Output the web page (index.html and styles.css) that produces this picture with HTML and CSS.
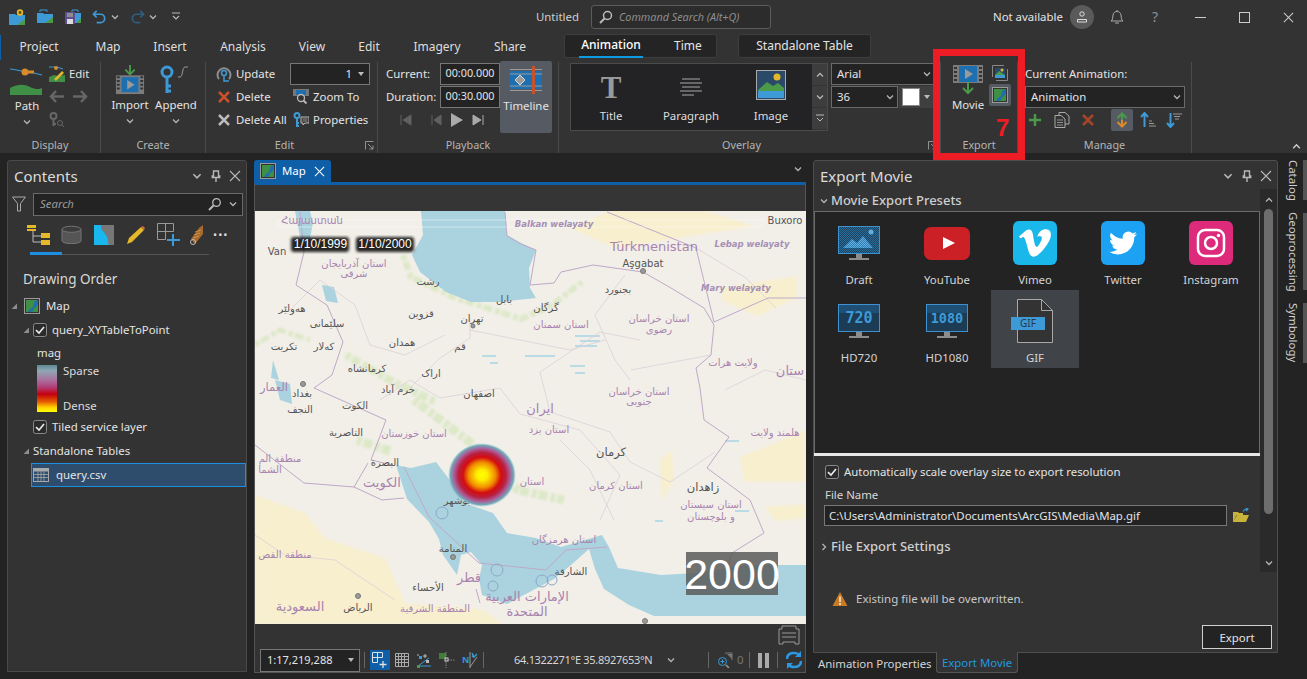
FILE: index.html
```html
<!DOCTYPE html>
<html lang="en">
<head>
<meta charset="utf-8">
<title>Untitled - Animation Export</title>
<link rel="stylesheet" href="styles.css">
</head>
<body>
<svg class="defs" width="0" height="0">
  <defs><pattern id="chk" width="2" height="2" patternUnits="userSpaceOnUse"><rect width="2" height="2" fill="#1c4463"/><rect width="1" height="1" fill="#2a6a97"/><rect x="1" y="1" width="1" height="1" fill="#2a6a97"/></pattern>
  <pattern id="chk2" width="2" height="2" patternUnits="userSpaceOnUse"><rect width="2" height="2" fill="#2f7fb5"/><rect width="1" height="1" fill="#62aee0"/><rect x="1" y="1" width="1" height="1" fill="#62aee0"/></pattern></defs>
  <symbol id="mapi" viewBox="0 0 16 16"><rect x=".5" y=".5" width="15" height="15" fill="#333" stroke="#9a9a9a"/><rect x="2" y="2" width="12" height="12" fill="#3f8f46"/><path d="M14 2v4l-2 3-2 1-1 3-3 1H4l2-3 3-2 1-4 1-2z" fill="#1d6fb0"/></symbol>
  <symbol id="chev" viewBox="0 0 10 10"><path d="M2 3.500 5 6.500 8 3.500" fill="none" stroke="currentColor" stroke-width="1.300"/></symbol>
  <symbol id="x" viewBox="0 0 12 12"><path d="M1 1 11 11M11 1 1 11" fill="none" stroke="currentColor" stroke-width="1.100"/></symbol>
  <symbol id="pin" viewBox="0 0 12 12"><path d="M3.500 1h5v5h1.200v1.500H2.300V6h1.200zM6 7.500V12" fill="none" stroke="currentColor" stroke-width="1.400"/></symbol>
  <symbol id="tri" viewBox="0 0 8 8"><path d="M7 1.500V7H1.500z" fill="#8d8d8d"/></symbol>
  <symbol id="check" viewBox="0 0 14 14"><rect x=".5" y=".5" width="13" height="13" rx="2" fill="#2b2b2b" stroke="#8a8a8a"/><path d="M3 7.200 6 10l5-6" fill="none" stroke="#e8e8e8" stroke-width="1.700"/></symbol>
  <symbol id="mon" viewBox="0 0 44 44"><rect x="1.500" y="5.500" width="41" height="27" fill="#1c3c55" stroke="#3f92cf"/><path d="M19 33h6v4h-6zM12 37h20v2H12z" fill="#8c8c8c"/></symbol>
</svg>

<header class="titlebar">
  <div class="qat">
    <svg class="i16" viewBox="0 0 16 16"><path d="M0 5h6l1 1h9v10H0z" fill="#3d9ad6"/><path d="M8 16l8-6v6z" fill="#4b9a4a"/><circle cx="11" cy="3.500" r="3.200" fill="#e5b82a"/><circle cx="11" cy="3.500" r="1.400" fill="#5b4a10"/></svg>
    <svg class="i16" viewBox="0 0 16 16"><path d="M3 3V1h7v2" fill="none" stroke="#3d9ad6"/><path d="M0 4h6l1 1h9v9H0z" fill="#3d9ad6"/><path d="M8 14l8-6v6z" fill="#4b9a4a"/></svg>
    <svg class="i16" viewBox="0 0 16 16"><path d="M7 3V1h6v2" fill="none" stroke="#3d9ad6"/><path d="M7 4h9v10H7z" fill="#3d9ad6"/><path d="M11 14l5-5v5z" fill="#4b9a4a"/><rect x="0" y="3" width="10" height="12" fill="#5d4d94"/><rect x="2" y="4" width="6" height="4" fill="#8d8d8d"/><rect x="2" y="10" width="6" height="5" fill="#ddd"/></svg>
    <svg class="undo" viewBox="0 0 16 16"><path d="M5 1 1.500 4.500 5 8M2 4.500h7a4.500 4.500 0 0 1 0 9H5" fill="none" stroke="#3d9ad6" stroke-width="1.800"/></svg>
    <svg class="chv"><use href="#chev"/></svg>
    <svg class="undo" viewBox="0 0 16 16"><path d="M11 1l3.500 3.500L11 8M14 4.500H7a4.500 4.500 0 0 0 0 9h4" fill="none" stroke="#2d5f82" stroke-width="1.800"/></svg>
    <svg class="chv"><use href="#chev"/></svg>
    <svg class="cust" viewBox="0 0 10 10"><path d="M1 1h8M2 4l3 3 3-3" fill="none" stroke="#bbb" stroke-width="1.100"/></svg>
  </div>
  <div class="tcenter">
    <span class="doc">Untitled</span>
    <div class="cmd">
      <svg class="i14" viewBox="0 0 14 14"><circle cx="8.500" cy="5.500" r="4" fill="none" stroke="#bbb" stroke-width="1.500"/><path d="M5.500 8.500 1 13" stroke="#bbb" stroke-width="2"/></svg>
      <span>Command Search (Alt+Q)</span>
    </div>
  </div>
  <div class="tright">
    <span class="na">Not available</span>
    <span class="avatar"><svg class="i12" viewBox="0 0 12 12"><circle cx="6" cy="3" r="2.200" fill="none" stroke="#ddd"/><path d="M1.500 11V8.500h9V11z" fill="none" stroke="#ddd"/></svg></span>
    <svg class="bell" viewBox="0 0 14 16"><path d="M1 12c2-1 1.500-3 2-6 .5-2.500 2-3.500 4-3.500s3.500 1 4 3.500c.5 3 0 5 2 6zM5 14h4M7 1v1.500" fill="none" stroke="#aaa"/></svg>
    <span class="help">?</span>
    <svg class="win first" viewBox="0 0 11 11"><path d="M0 5.500h11" stroke="#ccc"/></svg>
    <svg class="win" viewBox="0 0 11 11"><rect x=".5" y=".5" width="10" height="10" fill="none" stroke="#ccc"/></svg>
    <svg class="win"><use href="#x"/></svg>
  </div>
</header>

<nav class="tabs">
  <a class="t t78">Project</a><a class="t t60">Map</a><a class="t t64">Insert</a><a class="t t82">Analysis</a><a class="t t56">View</a><a class="t t58">Edit</a><a class="t t78">Imagery</a><a class="t t68">Share</a>
  <div class="ctx ctx1"><a class="cur">Animation</a><a class="t-time">Time</a></div>
  <div class="ctx ctx2"><a>Standalone Table</a></div>
</nav>

<section class="ribbon">
  <div class="group g-display">
    <div class="gbody">
      <div class="big path">
        <svg class="ico34" viewBox="0 0 34 30"><path d="M0 3c8 1 14 3 20 3l12 3" fill="none" stroke="#3d9ad6" stroke-width="1.200"/><circle cx="15" cy="6" r="3.500" fill="#d98a2b"/><rect x="18" y="4.500" width="6" height="3" fill="#d98a2b"/><path d="M0 22c8-4 14-4 20-1s10 2 12 1v7H0z" fill="#3f8f46"/></svg>
        <span>Path</span><svg class="chv"><use href="#chev"/></svg>
      </div>
      <div class="stack s-disp">
        <div class="row"><svg class="i16" viewBox="0 0 16 16"><path d="M0 1h8l6 2" stroke="#3d9ad6" fill="none"/><circle cx="7" cy="2" r="2" fill="#d98a2b"/><path d="M0 11l5-2 4 1 7-1v7H0z" fill="#3f8f46"/><path d="M6 14 14 6" stroke="#e5b82a" stroke-width="2.500"/></svg><span>Edit</span></div>
        <div class="row"><svg class="i16" viewBox="0 0 16 16"><path d="M7 2 2 7.500 7 13M2 7.500h13" fill="none" stroke="#666" stroke-width="2.500"/></svg><svg class="i16 sp" viewBox="0 0 16 16"><path d="M9 2l5 5.500L9 13M14 7.500H1" fill="none" stroke="#666" stroke-width="2.500"/></svg></div>
        <div class="row"><svg class="i16" viewBox="0 0 16 16"><circle cx="4.500" cy="4" r="3" fill="none" stroke="#666" stroke-width="2"/><path d="M4.500 7v7M4.500 12H7" stroke="#666" stroke-width="2"/><circle cx="11" cy="11" r="2.500" fill="none" stroke="#666"/><path d="M13 13l2 2" stroke="#666"/></svg></div>
      </div>
    </div>
    <div class="glabel">Display</div>
  </div>

  <div class="group g-create">
    <div class="gbody">
      <div class="big b-import">
        <svg class="ico34" viewBox="0 0 34 32"><path d="M17 0v9M12 5l5 5 5-5" fill="none" stroke="#4b9a4a" stroke-width="2"/><rect x="0" y="11" width="30" height="20" fill="#7c7c7c" transform="translate(2)"/><rect x="8" y="13" width="18" height="16" fill="#1d6fb0"/><path d="M14 16l8 5-8 5z" fill="#9a9a9a"/><path d="M3 13h3M3 17h3M3 21h3M3 25h3M28 13h3M28 17h3M28 21h3M28 25h3" stroke="#333" stroke-width="2"/></svg>
        <span>Import</span><svg class="chv"><use href="#chev"/></svg>
      </div>
      <div class="big b-append">
        <svg class="ico34" viewBox="0 0 34 30"><circle cx="8" cy="7" r="5" fill="none" stroke="#3d9ad6" stroke-width="3"/><path d="M8 12v16M8 21h4M8 26h4" stroke="#3d9ad6" stroke-width="3"/><path d="M19 12h2c3 0 2-10 5-10h3" fill="none" stroke="#999"/></svg>
        <span>Append</span><svg class="chv"><use href="#chev"/></svg>
      </div>
    </div>
    <div class="glabel">Create</div>
  </div>

  <div class="group g-edit">
    <div class="gbody">
      <div class="stack s-edit">
        <div class="row"><svg class="i16" viewBox="0 0 16 16"><path d="M3 13a6.500 6.500 0 1 1 10 0" fill="none" stroke="#8d8d8d" stroke-width="2"/><circle cx="8" cy="7" r="2.500" fill="none" stroke="#3d9ad6" stroke-width="1.500"/><path d="M8 9.500V15h5" fill="none" stroke="#3d9ad6" stroke-width="1.500"/></svg><span>Update</span></div>
        <div class="row"><svg class="i16" viewBox="0 0 16 16"><path d="M3 3 13 13M13 3 3 13" stroke="#c8502a" stroke-width="2.500"/></svg><span>Delete</span></div>
        <div class="row"><svg class="i16" viewBox="0 0 16 16"><path d="M3 3 13 13M13 3 3 13" stroke="#bbb" stroke-width="2.500"/></svg><span>Delete All</span></div>
      </div>
      <div class="stack s-edit2">
        <div class="spin"><span>1</span><i class="caret"></i></div>
        <div class="row"><svg class="i16" viewBox="0 0 16 16"><rect x="0" y="0" width="16" height="7" fill="#777"/><rect x="3" y="1" width="10" height="5" fill="#1d6fb0"/><circle cx="8" cy="9" r="3.500" fill="#333" stroke="#bbb" stroke-width="1.300"/><path d="M10.500 11.500l3 3" stroke="#bbb" stroke-width="1.800"/></svg><span>Zoom To</span></div>
        <div class="row"><svg class="i16" viewBox="0 0 16 16"><circle cx="4" cy="3.500" r="2.500" fill="none" stroke="#3d9ad6" stroke-width="2"/><path d="M4 6v9M4 11h2M4 14h2" stroke="#3d9ad6" stroke-width="2"/><path d="M8 5h8v6h-4l-2 2v-2H8z" fill="none" stroke="#bbb"/><path d="M9.500 7h5M9.500 9h5" stroke="#bbb" stroke-width=".7"/></svg><span>Properties</span></div>
      </div>
    </div>
    <div class="glabel launch l-edit">Edit<svg class="lau" viewBox="0 0 9 9"><path d="M.5 8.500v-8h8M3 3l5 5M8 4.500V8H4.500" fill="none" stroke="#aaa" stroke-width=".8"/></svg></div>
  </div>

  <div class="group g-play">
    <div class="gbody">
      <div class="playcol">
        <div class="row ti"><label>Current:</label><span class="tbox">00:00.000</span></div>
        <div class="row ti"><label>Duration:</label><span class="tbox">00:30.000</span></div>
        <div class="transport">
          <svg class="i12" viewBox="0 0 12 12"><path d="M1 1v10M11 1v10L3 6z" stroke="#606060" fill="#606060"/></svg>
          <svg class="i12 tg" viewBox="0 0 12 12"><path d="M2 1v10M11 1v10L4 6z" stroke="#606060" fill="#606060"/></svg>
          <svg class="playb" viewBox="0 0 12 14"><path d="M0 0v14l12-7z" fill="#aaa"/></svg>
          <svg class="i12" viewBox="0 0 12 12"><path d="M1 1v10l8-5zM11 1v10" stroke="#aaa" fill="#aaa"/></svg>
        </div>
      </div>
      <div class="timeline">
        <svg class="tlico" viewBox="0 0 32 28"><path d="M0 5h32v18H0z" fill="#1d6fb0"/><path d="M0 3.500h32M0 8h32M0 20h32M0 24.500h32" stroke="#9a9a9a"/><path d="M10 9l5 5-5 5-5-5z" fill="#9a9a9a" stroke="#ddd"/><rect x="22" y="0" width="3" height="28" fill="#c8502a"/></svg>
        <span>Timeline</span>
      </div>
    </div>
    <div class="glabel">Playback</div>
  </div>

  <div class="group g-over">
    <div class="gbody">
      <div class="gallery">
        <div class="gitem g1"><b class="bigt">T</b><span>Title</span></div>
        <div class="gitem g2"><svg class="parag" viewBox="0 0 22 18"><path d="M2 1h18M0 5h22M2 9h18M0 13h22M2 17h12" stroke="#aaa"/></svg><span>Paragraph</span></div>
        <div class="gitem g3"><svg class="img30" viewBox="0 0 30 30"><rect x=".5" y=".5" width="29" height="29" fill="#2b4a6a" stroke="#aaa"/><circle cx="21" cy="7" r="3.500" fill="#e5b82a"/><path d="M2 20l9-8 6 4 5-3 6 5v3H2z" fill="#4b9a4a"/><rect x="2" y="21" width="26" height="7" fill="#3d9ad6"/></svg><span>Image</span></div>
        <div class="gscroll">
          <i><svg class="chv flip"><use href="#chev"/></svg></i>
          <i><svg class="chv"><use href="#chev"/></svg></i>
          <i><svg class="cust" viewBox="0 0 10 10"><path d="M1 1h8M2 4l3 3 3-3" fill="none" stroke="#bbb"/></svg></i>
        </div>
      </div>
      <div class="fontcol">
        <div class="combo c-font"><span>Arial</span><svg class="chv"><use href="#chev"/></svg></div>
        <div class="fontrow">
          <div class="combo c-size"><span>36</span><svg class="chv"><use href="#chev"/></svg></div>
          <div class="colorbtn"><i class="sw"></i><i class="caret"></i></div>
        </div>
      </div>
    </div>
    <div class="glabel launch l-over">Overlay<svg class="lau" viewBox="0 0 9 9"><path d="M.5 8.500v-8h8M3 3l5 5M8 4.500V8H4.500" fill="none" stroke="#aaa" stroke-width=".8"/></svg></div>
  </div>

  <div class="group g-export">
    <div class="gbody">
      <div class="big b-movie">
        <svg class="movieico" viewBox="0 0 32 30"><rect width="30" height="18" x="1" fill="#7c7c7c"/><rect x="7" y="1" width="18" height="16" fill="#1d6fb0"/><path d="M13 4l8 5-8 5z" fill="#9a9a9a"/><path d="M2 3h3M2 7h3M2 11h3M2 15h3M27 3h3M27 7h3M27 11h3M27 15h3" stroke="#333" stroke-width="2"/><path d="M16 17v11M11 23l5 5 5-5" fill="none" stroke="#4b9a4a" stroke-width="2"/></svg>
        <span>Movie</span>
      </div>
      <div class="exp2">
        <svg class="i16" viewBox="0 0 16 16"><path d="M.5 12V.5H12M15.500 4v11.500H4" fill="none" stroke="#888"/><rect x="3" y="3" width="10" height="10" fill="#2b4a6a"/><circle cx="10" cy="5" r="1.500" fill="#e5b82a"/><path d="M3 10l4-4 6 4z" fill="#4b9a4a"/><rect x="3" y="10" width="10" height="3" fill="#3d9ad6"/></svg>
        <span class="activebtn"><svg class="i16"><use href="#mapi"/></svg></span>
      </div>
    </div>
    <div class="glabel">Export</div>
  </div>

  <div class="group g-manage">
    <div class="gbody col">
      <div class="curan">Current Animation:</div>
      <div class="combo c-anim"><span>Animation</span><svg class="chv"><use href="#chev"/></svg></div>
      <div class="mrow">
        <svg class="i16" viewBox="0 0 16 16"><path d="M8 2v12M2 8h12" stroke="#4b9a4a" stroke-width="2.500"/></svg>
        <svg class="i16" viewBox="0 0 16 16"><path d="M5 3V.5h6L15 4v8h-4" fill="none" stroke="#aaa"/><path d="M1 3.500h6L11 7v8.500H1z" fill="none" stroke="#aaa"/><path d="M3 8h6M3 10.500h6M3 13h6" stroke="#aaa" stroke-width=".8"/></svg>
        <svg class="i16 mred" viewBox="0 0 16 16"><path d="M3 3 13 13M13 3 3 13" stroke="#a8442a" stroke-width="2.500"/></svg>
        <span class="ordbtn"><svg class="i16" viewBox="0 0 16 16"><path d="M3.500 6 8 1.500 12.500 6M8 2v6" fill="none" stroke="#4b9a4a" stroke-width="2"/><path d="M3.500 10 8 14.500 12.500 10M8 14V8" fill="none" stroke="#d98a2b" stroke-width="2"/></svg></span>
        <svg class="i16" viewBox="0 0 16 16"><path d="M1 5l3.500-4L8 5M4.500 2v13" fill="none" stroke="#3d9ad6" stroke-width="2"/><path d="M9 9h3M9 11.500h5M9 14h7" stroke="#999"/></svg>
        <svg class="i16" viewBox="0 0 16 16"><path d="M1 11l3.500 4L8 11M4.500 14V1" fill="none" stroke="#3d9ad6" stroke-width="2"/><path d="M7 2h9M8 4.500h6M9 7h4" stroke="#999"/></svg>
      </div>
    </div>
    <div class="glabel">Manage</div>
  </div>
  <svg class="collapse flip"><use href="#chev"/></svg>
  <div class="redframe"><b>7</b></div>
</section>

<main class="dock">
  <aside class="contents">
    <div class="phead"><h2>Contents</h2><span class="pctl"><svg><use href="#chev"/></svg><svg><use href="#pin"/></svg><svg><use href="#x"/></svg></span></div>
    <div class="searchrow">
      <svg class="funnel" viewBox="0 0 14 16"><path d="M.5 1h13L8.500 7.500V15h-3V7.500z" fill="none" stroke="#aaa"/></svg>
      <div class="search"><em>Search</em><svg class="i14" viewBox="0 0 14 14"><circle cx="8.500" cy="5.500" r="3.800" fill="none" stroke="#bbb" stroke-width="1.300"/><path d="M5.500 8.500 1 13" stroke="#bbb" stroke-width="2"/></svg><svg class="chv"><use href="#chev"/></svg></div>
    </div>
    <div class="tools">
      <svg class="tool t-a" viewBox="0 0 24 24"><rect x="0" y="2" width="9" height="3" fill="#e5b82a"/><rect x="0" y="6" width="9" height="2" fill="#e5b82a"/><path d="M6 8v11h8M6 13h8" fill="none" stroke="#bbb"/><path d="M14 10h9v5h-9zM14 17h9v5h-9z" fill="#e5b82a"/></svg>
      <svg class="tool t-b" viewBox="0 0 22 20"><path d="M1 4v12c0 4 20 4 20 0V4" fill="#555" stroke="#777"/><ellipse cx="11" cy="4" rx="10" ry="3.200" fill="#3c3c3c" stroke="#777"/></svg>
      <svg class="tool t-c" viewBox="0 0 20 20"><rect width="20" height="20" fill="#777"/><path d="M0 0h7c0 6 2 5 5 10s1 6 3 10H0z" fill="#19b7ee"/></svg>
      <svg class="tool t-d" viewBox="0 0 20 20"><path d="M1 19l2-6L15 2l3 3L6 17z" fill="#e5b82a"/><path d="M15 2l2-1 2 2-1 2z" fill="#c8703a"/></svg>
      <svg class="tool t-e" viewBox="0 0 24 24"><path d="M.5.500h16v8h-8v8H.5zM8.500.500v16M.5 8.500h8" fill="none" stroke="#999"/><path d="M16 11v12M10 17h13" stroke="#3d9ad6" stroke-width="2"/></svg>
      <svg class="tool t-f" viewBox="0 0 14 22"><path d="M13 1v9L5 20 1 15 9 4z" fill="#a86a2b"/><path d="M5 8l6-2M4 11l6-2M3 14l6-2" stroke="#d9a060" stroke-width=".7"/><circle cx="3" cy="18" r="2.500" fill="none" stroke="#bbb"/></svg>
      <span class="dots">•••</span>
    </div>
    <div class="tline"><i></i></div>
    <h3>Drawing Order</h3>
    <ul class="tree">
      <li class="l0"><svg class="tr"><use href="#tri"/></svg><svg class="i16"><use href="#mapi"/></svg><span>Map</span></li>
      <li class="l1"><svg class="tr"><use href="#tri"/></svg><svg class="cb"><use href="#check"/></svg><span>query_XYTableToPoint</span></li>
      <li class="legend">
        <div class="mag">mag</div>
        <div class="lg"><i class="ramp"></i><div class="lgt"><span>Sparse</span><span>Dense</span></div></div>
      </li>
      <li class="l2"><svg class="cb"><use href="#check"/></svg><span>Tiled service layer</span></li>
      <li class="l3"><svg class="tr"><use href="#tri"/></svg><span>Standalone Tables</span></li>
      <li class="sel"><svg class="i16" viewBox="0 0 16 16"><rect x=".5" y="1.500" width="15" height="13" fill="none" stroke="#aaa"/><rect x=".5" y="1.500" width="15" height="3" fill="#aaa"/><path d="M.5 7.500h15M.5 10.500h15M5 4.500v10M8 4.500v10M11 4.500v10" stroke="#aaa" stroke-width=".8"/></svg><span>query.csv</span></li>
    </ul>
  </aside>

  <section class="center">
    <div class="doctabs">
      <div class="doctab"><svg class="i16"><use href="#mapi"/></svg><span>Map</span><svg class="dx"><use href="#x"/></svg></div>
      <svg class="chv dchev"><use href="#chev"/></svg>
    </div>
    <div class="mappanel">
      <div class="mapband"></div>
      <div class="mapwrap">
        <svg class="map" viewBox="255 211 551 413">
          <defs>
            <radialGradient id="heat"><stop offset="0" stop-color="#ffff00"/><stop offset=".16" stop-color="#ffee00"/><stop offset=".4" stop-color="#f08a00"/><stop offset=".56" stop-color="#d40c10"/><stop offset=".7" stop-color="#b8203f"/><stop offset=".82" stop-color="#ad5a96"/><stop offset=".93" stop-color="#70a8b8"/><stop offset="1" stop-color="#8fc8d2" stop-opacity="0"/></radialGradient>
            <filter id="soft"><feGaussianBlur stdDeviation="1.500"/></filter>
            <filter id="soft2"><feGaussianBlur stdDeviation="1"/></filter>
          </defs>
          <rect x="255" y="211" width="551" height="413" fill="#f2efe9"/>
          <g fill="#f8efcf" filter="url(#soft2)">
            <path d="M255 495l50 18 20 25 60 20 20 45 78 7 20 14H255z"/>
            <path d="M570 228l40-17h95l50 15-140 22z"/>
            <path d="M722 288l75-12v22l-40 18-35-15z"/>
            <path d="M740 457l66-27v52h-62z"/>
            <path d="M765 507l41-3v14l-30 3z"/>
            <path d="M660 460l12-10 2 30-12 20z"/>
          </g>
          <g class="greens" filter="url(#soft2)">
            <path stroke-width="6" d="M403 255l8 22 42 20 68 22 30-13 31-24"/>
            <path stroke-width="8" d="M346 355l47 27 43 20"/>
            <path stroke-width="9" d="M414 400l57 43 47 47 46 10"/>
            <path stroke-width="9" d="M357 440l36 12"/>
            <path stroke-width="5" d="M255 345l25-15 30 10"/>
          </g>
          <path fill="#aad3df" d="M421 211h84l2 24 14 8 15 7-7 18 1 20 6 10-36 4-29 0-25-10-26-20-8-17 11-20z"/>
          <path fill="#aad3df" d="M396 465l15 3 25-6 16 21 12 20 29 10 14 20 29 5 25 9 41-12 7 12 9 21 43 7 35-2 50-8 60 0 45 2v49H654l-25-11-25-16-9-20-6-20-18 16-17 14-47 25-25-9-3-16 3-14-11-13-10 3-4 20-14-20-4-16-10-17-22-23z"/>
          <path fill="#aad3df" d="M295 211h15l3 12-4 20-9-6zM322 285l12 2 4 16-12-2zM275 380l15 4 2 20-12-4zM273 360l6 20-8-2z"/>
          <g fill="#b8dbe6"><rect x="575" y="335" width="25" height="2"/><rect x="580" y="340" width="20" height="2"/><rect x="575" y="345" width="22" height="2"/><rect x="482" y="355" width="14" height="2"/><rect x="525" y="355" width="30" height="2"/><rect x="570" y="365" width="15" height="2"/><rect x="575" y="372" width="10" height="2"/><rect x="490" y="362" width="8" height="2"/><rect x="725" y="440" width="14" height="2"/><rect x="735" y="510" width="14" height="2"/><rect x="655" y="520" width="8" height="2"/></g>
          <g class="border2">
            <path d="M380 400l30-20 30 18 60-10 20 26 60 16 40 45-20 45M470 318v20l-30 20-30 30M640 340l-40-8-60 40 10 40 60 20 20 30 40 20 45-30M470 330l100 20 35-10M625 275l-30 40 20 45 15 20M560 440l30 30 24 50M290 310l30-30 35 25 15 40 35 10 40-20"/>
            <path d="M711 355l-80 15M255 535l30 20 50 5 60 40M696 248l50 30 30 30M725 390l40-20 41 10"/>
          </g>
          <g class="border">
            <path d="M505 212l2 24 14 8 15 6-6 35 24-2 7-11 32-7 50 7 28 16 33 20 10 17-3 30-15 13 4 20 4 32 25 17-22 31 43 32 14 33-32 20-7 27"/>
            <path d="M607 212l89 36 18 74M714 322l54-24h38"/>
            <path d="M300 212l4 40-8 33 31 20 16 37-11 33-18 13 72 32-15 40 22 5M304 483l50 4 14-24M255 445l49 38M354 487l28 13 22-2"/>
            <path d="M404 467l25 50 50 46 67 7 20-20 41-3M480 603l-4-14"/>
          </g>
          <g class="mapcircles"><circle cx="497" cy="570" r="6"/><circle cx="493" cy="586" r="5"/><circle cx="542" cy="581" r="6"/><circle cx="552" cy="580" r="5"/><circle cx="442" cy="513" r="6"/></g>
          <rect x="278" y="220" width="485" height="7" fill="none" stroke="#fff" stroke-opacity=".45"/>
          <g class="cities">
            <circle cx="473" cy="326" r="2"/><circle cx="643" cy="271" r="2.500"/><circle cx="303" cy="384" r="2.500"/><circle cx="358" cy="596" r="2.500"/><circle cx="453" cy="557" r="2.500"/><circle cx="645" cy="621" r="2.500"/>
          </g>
          <g class="mlab pur">
            <text x="312" y="224">Հայաստան</text>
            <text x="654" y="251" class="lg14">Türkmenistan</text>
            <text x="354" y="267">استان آذربایجان</text><text x="354" y="277">شرقی</text>
            <text x="561" y="328">استان سمنان</text><text x="659" y="322">استان خراسان</text><text x="659" y="333">رضوی</text>
            <text x="733" y="366">ولایت هرات</text><text x="790" y="375" class="lg14">ستان</text><text x="274" y="391" class="lg12">العمار</text>
            <text x="639" y="395">استان خراسان</text><text x="639" y="405">جنوبی</text>
            <text x="540" y="413" class="lg14">ایران</text><text x="549" y="433">استان یزد</text><text x="414" y="437">استان خوزستان</text><text x="775" y="436">هلمند ولایت</text>
            <text x="280" y="462">منطقة الم</text><text x="270" y="473">الشما</text><text x="382" y="487" class="lg14">الکويت</text><text x="532" y="485">استان</text><text x="616" y="489">استان کرمان</text>
            <text x="711" y="508">استان سیستان</text><text x="711" y="520">و بلوچستان</text><text x="564" y="543">استان هرمزگان</text><text x="285" y="558">منطقة القص</text>
            <text x="469" y="582" class="lg14">قطر</text><text x="527" y="601" class="lg14">الإمارات العربية</text><text x="527" y="616" class="lg14">المتحدة</text><text x="300" y="611" class="lg14">السعودية</text><text x="435" y="612">المنطقة الشرقية</text>
          </g>
          <g class="mlab ital pur"><text x="554" y="227">Balkan welayaty</text><text x="752" y="247">Lebap welayaty</text><text x="736" y="291">Mary welayaty</text></g>
          <g class="mlab drk">
            <text x="785" y="224">Buxoro</text><text x="277" y="255">Van</text><text x="643" y="267">Aşgabat</text>
            <text x="428" y="285">رشت</text><text x="618" y="293">بجنورد</text><text x="504" y="303">بابل</text><text x="546" y="311">گرگان</text><text x="292" y="312">هەولێر</text><text x="421" y="317">قزوین</text><text x="472" y="322">تهران</text><text x="327" y="327">سلێمانی</text>
            <text x="284" y="350">تكريت</text><text x="324" y="350">کەلار</text><text x="402" y="346">همدان</text><text x="460" y="350">قم</text><text x="367" y="372">کرمانشاه</text><text x="431" y="377">اراک</text>
            <text x="302" y="397">بغداد</text><text x="398" y="393">خرم آباد</text><text x="479" y="397">اصفهان</text><text x="300" y="413">النجف</text><text x="355" y="409">الكوت</text><text x="346" y="436">التاصرية</text>
            <text x="611" y="456" class="lg12">کرمان</text><text x="385" y="466">البصرة</text><text x="703" y="491" class="lg12">زاهدان</text><text x="453" y="552">المنامة</text><text x="571" y="575">الشارقة</text><text x="428" y="591">الأحساء</text><text x="358" y="611">الرياض</text>
            <text x="457" y="504">بوشهر</text>
          </g>
          <ellipse cx="482" cy="475" rx="34" ry="32" fill="url(#heat)"/>
          <rect x="291" y="237" width="58" height="15" rx="3" fill="#000" opacity=".85" filter="url(#soft)"/>
          <rect x="356" y="237" width="58" height="15" rx="3" fill="#000" opacity=".85" filter="url(#soft)"/>
          <text class="stamp" x="320.500" y="248">1/10/1999</text><text class="stamp" x="385" y="248">1/10/2000</text>
          <rect x="686" y="552" width="92" height="43" fill="#5b5b5b" opacity=".85"/>
          <text class="year" x="732" y="589">2000</text>
        </svg>
      </div>
      <div class="mapfoot">
        <svg class="scaleico" viewBox="0 0 22 20"><path d="M1 4h3V1h14v3h3v15h-4v-2H5v2H1z" fill="none" stroke="#999"/><path d="M4 8h14M4 12h14" stroke="#999"/></svg>
      </div>
      <div class="status">
        <div class="scale"><span>1:17,219,288</span><i class="caret"></i></div>
        <i class="sep"></i>
        <span class="sbtn on"><svg class="i16" viewBox="0 0 16 16"><path d="M.5.500h10v5h-5v5h-5zM5.500.500v10M.5 5.500h5" fill="none" stroke="#e0e0e0"/><path d="M11 9v7M7.500 12.500h7" stroke="#e0e0e0" stroke-width="1.300"/></svg></span>
        <svg class="i14 gridi" viewBox="0 0 14 14"><path d="M.5.500h13v13H.5zM.5 3.500h13M.5 6.500h13M.5 9.500h13M3.500.5v13M6.500.5v13M9.500.5v13" fill="none" stroke="#aaa"/></svg>
        <svg class="i16 st" viewBox="0 0 16 16"><path d="M2 14 13 6M2 14h13" stroke="#3d9ad6"/><path d="M1 3h2M9 2v4M7 4h4" stroke="#bbb"/><rect x="1" y="13" width="3" height="3" fill="#4b9a4a"/><rect x="3" y="4" width="3" height="3" fill="#3d9ad6"/><rect x="10" y="8" width="3" height="3" fill="#bbb"/></svg>
        <svg class="i16 st" viewBox="0 0 16 16"><rect x="0" y="1" width="7" height="6" fill="#3f7f3a"/><path d="M7 0v16M9 8h7" stroke="#888" stroke-dasharray="1.500 1"/><rect x="6" y="6" width="3" height="3" fill="none" stroke="#ccc"/></svg>
        <svg class="i16 st" viewBox="0 0 16 16"><text class="nt" x="0" y="11">N</text><path d="M8 0v16M8 15l7-10" stroke="#999"/><path d="M10 1l2 4 3-3M12 5l-2-1" fill="none" stroke="#3d9ad6" stroke-width="1.400"/></svg>
        <i class="sep s2"></i>
        <span class="coords">64.1322271°E 35.8927653°N</span>
        <svg class="chv cc"><use href="#chev"/></svg>
        <i class="sep s3"></i>
        <span class="sel0"><svg class="i16" viewBox="0 0 16 16"><path d="M8 1h7v7" fill="none" stroke="#777"/><path d="M10 2h5v5z" fill="#777"/><circle cx="5.500" cy="9.500" r="4" fill="none" stroke="#3d9ad6"/><path d="M3.500 9.500h4M5.500 7.500v4" stroke="#3d9ad6"/><path d="M9 13l3 3" stroke="#999" stroke-width="1.500"/></svg><span>0</span></span>
        <i class="sep"></i>
        <span class="pause"><i></i><i></i></span>
        <i class="sep"></i>
        <svg class="refresh" viewBox="0 0 16 18"><path d="M1 8c0-4 3-6 7-6 2 0 4 .5 5 2" fill="none" stroke="#2b98e0" stroke-width="2.500"/><path d="M15 0v6H9z" fill="#2b98e0"/><path d="M15 10c0 4-3 6-7 6-2 0-4-.5-5-2" fill="none" stroke="#2b98e0" stroke-width="2.500"/><path d="M1 18v-6h6z" fill="#2b98e0"/></svg>
      </div>
    </div>
  </section>

  <section class="right">
    <div class="exportp">
      <div class="phead ex"><h2>Export Movie</h2><span class="pctl"><svg><use href="#chev"/></svg><svg><use href="#pin"/></svg><svg><use href="#x"/></svg></span></div>
      <div class="exscroll">
        <div class="exmain">
          <div class="sechead"><svg class="chv"><use href="#chev"/></svg><span>Movie Export Presets</span></div>
          <div class="presets">
            <div class="preset"><svg class="pi" viewBox="0 0 44 44"><use href="#mon"/><rect x="2" y="6" width="40" height="26" fill="url(#chk)"/><path d="M6 27l9-9 5 4 6-7 10 12z" fill="url(#chk2)"/><circle cx="34" cy="11" r="2.500" fill="#62aee0"/></svg><span>Draft</span></div>
            <div class="preset"><svg class="pi" viewBox="0 0 44 44"><rect x="-1" y="6" width="46" height="33" rx="7" fill="#cb2026"/><path d="M18 16v12l12-6z" fill="#fff"/></svg><span>YouTube</span></div>
            <div class="preset"><svg class="pi" viewBox="0 0 44 44"><rect width="44" height="44" rx="6" fill="#1ab7ea"/><g transform="translate(6 6) scale(1.330)"><path fill="#fff" d="M23.977 6.416c-.105 2.338-1.739 5.543-4.894 9.609-3.268 4.247-6.026 6.37-8.29 6.37-1.409 0-2.578-1.294-3.553-3.881L5.322 11.4C4.603 8.816 3.834 7.522 3.01 7.522c-.179 0-.806.378-1.881 1.132L0 7.197c1.185-1.044 2.351-2.084 3.501-3.128C5.08 2.701 6.266 1.984 7.055 1.91c1.867-.18 3.016 1.1 3.447 3.838.465 2.953.789 4.789.971 5.507.539 2.45 1.131 3.674 1.776 3.674.502 0 1.256-.796 2.265-2.385 1.004-1.589 1.54-2.797 1.612-3.628.144-1.371-.395-2.061-1.614-2.061-.574 0-1.167.121-1.777.391 1.186-3.868 3.434-5.757 6.762-5.637 2.473.06 3.628 1.664 3.493 4.797z"/></g></svg><span>Vimeo</span></div>
            <div class="preset"><svg class="pi" viewBox="0 0 44 44"><rect width="44" height="44" rx="6" fill="#1da1f2"/><g transform="translate(8 8) scale(1.170)"><path fill="#fff" d="M23.953 4.57a10 10 0 01-2.825.775 4.958 4.958 0 002.163-2.723c-.951.555-2.005.959-3.127 1.184a4.92 4.92 0 00-8.384 4.482C7.69 8.095 4.067 6.13 1.64 3.162a4.822 4.822 0 00-.666 2.475c0 1.71.87 3.213 2.188 4.096a4.904 4.904 0 01-2.228-.616v.06a4.923 4.923 0 003.946 4.827 4.996 4.996 0 01-2.212.085 4.936 4.936 0 004.604 3.417 9.867 9.867 0 01-6.102 2.105c-.39 0-.779-.023-1.17-.067a13.995 13.995 0 007.557 2.209c9.053 0 13.998-7.496 13.998-13.985 0-.21 0-.42-.015-.63A9.935 9.935 0 0024 4.59z"/></g></svg><span>Twitter</span></div>
            <div class="preset"><svg class="pi" viewBox="0 0 44 44"><rect width="44" height="44" rx="6" fill="#dd2a7b"/><rect x="9" y="9" width="26" height="26" rx="7" fill="none" stroke="#fff" stroke-width="2.500"/><circle cx="22" cy="22" r="6" fill="none" stroke="#fff" stroke-width="2.500"/><circle cx="29.500" cy="14.500" r="1.700" fill="#fff"/></svg><span>Instagram</span></div>
            <div class="preset"><svg class="pi" viewBox="0 0 44 44"><use href="#mon"/><path d="M2 6h40v8H2z" fill="#1f4f74"/><text class="res" x="22" y="24">720</text></svg><span>HD720</span></div>
            <div class="preset"><svg class="pi" viewBox="0 0 44 44"><use href="#mon"/><path d="M2 6h40v8H2z" fill="#1f4f74"/><text class="res res2" x="22" y="24">1080</text></svg><span>HD1080</span></div>
            <div class="preset cur"><svg class="pi" viewBox="0 0 44 44"><path d="M4.500.500h24l11 11v32h-35z" fill="#333" stroke="#a8a8a8"/><path d="M28.500.500v11h11" fill="none" stroke="#a8a8a8"/><rect x="-2" y="18" width="34" height="13" fill="#3d9ad6"/><text class="giftxt" x="15" y="28">GIF</text></svg><span>GIF</span></div>
          </div>
          <div class="whitebar"></div>
          <label class="autos"><svg class="cb"><use href="#check"/></svg><span>Automatically scale overlay size to export resolution</span></label>
          <div class="fname">File Name</div>
          <div class="frow"><div class="finput">C:\Users\Administrator\Documents\ArcGIS\Media\Map.gif</div><svg class="i16" viewBox="0 0 16 16"><path d="M0 14V4h5l1 1h4v2H3.500L0 14h13l3-7H4" fill="#c8b43a"/><path d="M10 3.500c1-2 2.500-2.500 4-2.500M12.500 0l2.500 1-2 2" fill="none" stroke="#3d9ad6" stroke-width="1.200"/></svg></div>
          <div class="sechead fes"><svg class="chv rot"><use href="#chev"/></svg><span>File Export Settings</span></div>
        </div>
        <div class="sbar">
          <svg class="chv flip"><use href="#chev"/></svg>
          <i class="thumb"></i>
          <svg class="chv"><use href="#chev"/></svg>
        </div>
      </div>
      <div class="warn"><svg class="i16" viewBox="0 0 16 16"><path d="M8 1 15.500 15H.5z" fill="#c97a24"/><path d="M8 5.500v5.500M8 12v2" stroke="#f1d9b0" stroke-width="1.800"/></svg><span>Existing file will be overwritten.</span></div>
      <div class="exbtnrow"><button class="exbtn">Export</button></div>
    </div>
    <div class="ptabs"><span class="pt1">Animation Properties</span><span class="pt2">Export Movie</span></div>
  </section>

  <aside class="vtabs">
    <div class="vt v1"><span>Catalog</span></div>
    <div class="vt v2"><span>Geoprocessing</span></div>
    <div class="vt v3"><span>Symbology</span></div>
  </aside>
</main>
</body>
</html>
```

FILE: styles.css
```css
*{box-sizing:border-box}
html,body{margin:0;padding:0}
body{width:1307px;height:679px;overflow:hidden;background:#232324;color:#e4e4e4;font:11.400px/1.2 "Noto Sans","Open Sans",sans-serif;position:relative}
.defs{position:absolute}
svg{display:block;flex:none}
ul{list-style:none;margin:0;padding:0}
h2,h3{margin:0;font-weight:400}
.i16{width:16px;height:16px}
.i14{width:14px;height:14px}
.i12{width:12px;height:12px}
.chv{width:10px;height:10px;color:#b5b5b5}
.flip{transform:rotate(180deg)}
.rot{transform:rotate(-90deg)}
.caret{width:0;height:0;border:3.500px solid transparent;border-top:4px solid #bbb;border-bottom:0;display:block}

.titlebar{height:34px;background:#333;display:flex;align-items:center;position:relative}
.qat{display:flex;align-items:center;padding-left:9px;width:530px}
.qat .i16:nth-child(2){margin-left:12px}
.qat .i16:nth-child(3){margin-left:12px}
.undo{width:15px;height:15px;margin-left:11px}
.qat .chv{margin-left:3px}
.qat .undo:nth-of-type(6){margin-left:10px}
.cust{width:10px;height:10px;margin-left:13px}
.tcenter{display:flex;align-items:center;margin-left:6px}
.doc{color:#cfcfcf;width:55px}
.cmd{width:180px;height:24px;border:1px solid #5a5a5a;border-radius:3px;background:#2c2c2c;display:flex;align-items:center;gap:6px;padding-left:7px}
.cmd span{font-style:italic;color:#8c8c8c;font-size:10.800px}
.tright{display:flex;align-items:center;margin-left:222px}
.na{width:77px;white-space:nowrap}
.avatar{width:24px;height:24px;border-radius:50%;background:#5a5a5a;display:flex;align-items:center;justify-content:center}
.bell{width:14px;height:16px;margin-left:16px}
.help{color:#8f8f8f;font-size:14px;margin-left:28px;width:8px}
.win{width:11px;height:11px;margin-left:33px;color:#ccc}
.win.first{margin-left:35px}

.tabs{height:26px;background:#333;display:flex;align-items:stretch;font-size:12px;position:relative}
.tabs::before{content:"";position:absolute;left:0;top:1px;width:1px;height:48px;background:#0f5fa8}
.t{display:flex;align-items:center;justify-content:center;color:#dedede}
.t78{width:78px}.t60{width:60px}.t64{width:64px}.t82{width:82px}.t56{width:56px}.t58{width:58px}.t68{width:68px}
.ctx{background:#242425;border:1px solid #3d3d3d;border-radius:3px;display:flex;align-items:center;height:24px;margin-top:0}
.ctx1{width:153px;margin-left:20px;padding-left:14px;position:relative}
.ctx1 .cur{color:#fff;border-bottom:2px solid #0c9ce4;height:24px;line-height:22px;width:64px;text-align:center;white-space:nowrap;font-weight:500}
.t-time{margin-left:31px}
.ctx2{width:133px;margin-left:21px;justify-content:center;white-space:nowrap}

.ribbon{height:93px;background:#333;display:flex;position:relative;padding-top:2px}
.group{display:flex;flex-direction:column;border-right:1px solid #4b4b4b;height:91px}
.gbody{flex:1;display:flex;min-height:0}
.gbody.col{flex-direction:column}
.glabel{height:15px;font-size:10.800px;line-height:14px;color:#b4b4b4;text-align:center;position:relative;flex:none}
.l-edit{padding-right:14px}
.l-over{padding-right:16px}
.lau{position:absolute;right:3px;top:3px;width:9px;height:9px}
.big{display:flex;flex-direction:column;align-items:center;color:#e4e4e4}
.big .chv{margin-top:4px}
.row{display:flex;align-items:center;gap:4px;height:23px;white-space:nowrap}
.stack{display:flex;flex-direction:column}
.ico34{width:34px;height:30px;margin-bottom:3px}

.g-display{width:101px}
.path{width:34px;margin:4px 0 0 10px;white-space:nowrap}
.s-disp{margin:0 0 0 5px}
.s-disp .sp{margin-left:3px}
.g-create{width:105px}
.b-import{width:40px;margin:3px 0 0 9px;white-space:nowrap}
.b-append{width:42px;margin:3px 0 0 5px;white-space:nowrap}
.g-edit{width:172px}
.s-edit{margin:0 0 0 10px;width:74px}
.s-edit2{margin:1px 0 0 0}
.s-edit2 .row{padding-left:3px}
.spin{width:80px;height:22px;background:#232324;border:1px solid #777;display:flex;align-items:center;justify-content:flex-end;gap:6px;padding-right:5px;color:#e4e4e4}
.g-play{width:181px}
.playcol{width:122px;margin-left:8px}
.ti{gap:0;height:23px}
.ti label{width:54px}
.tbox{width:60px;height:22px;border:1px solid #777;background:#232324;display:flex;align-items:center;justify-content:center;color:#e4e4e4;font-size:10.800px}
.transport{display:flex;align-items:center;margin:5px 0 0 14px}
.transport .tg{margin-left:18px}
.playb{width:12px;height:14px;margin:0 9px 0 9px}
.timeline{width:52px;height:72px;background:#555a63;border-radius:2px;display:flex;flex-direction:column;align-items:center;margin:-1px 0 0 -8px;padding-top:5px}
.tlico{width:32px;height:28px;margin-bottom:5px}
.g-over{width:382px}
.gallery{width:258px;height:68px;margin:1px 0 0 11px;background:#232326;border:1px solid #4b4b4b;display:flex;position:relative}
.gitem{display:flex;flex-direction:column;align-items:center;justify-content:flex-end;padding-bottom:7px;color:#ddd;height:66px}
.g1{width:80px}.g2{width:80px}.g3{width:80px}
.bigt{font:700 31px/36px "Liberation Serif",serif;color:#9a9a9a;height:36px;margin-bottom:3px}
.parag{width:22px;height:18px;margin-bottom:13px}
.img30{width:30px;height:30px;margin-bottom:9px}
.gscroll{width:15px;margin-left:auto;display:flex;flex-direction:column;background:#333}
.gscroll i{flex:1;display:flex;align-items:center;justify-content:center;background:#3d3d3d;margin-bottom:1px}
.gscroll .cust{margin:0}
.fontcol{margin:1px 0 0 3px;display:flex;flex-direction:column;gap:1px}
.combo{height:22px;background:#232324;border:1px solid #6a6a6a;display:flex;align-items:center;justify-content:space-between;padding:0 2px 0 5px;color:#e4e4e4}
.c-font{width:104px}
.fontrow{display:flex;gap:1px}
.c-size{width:67px}
.colorbtn{width:36px;height:22px;background:#3f3f3f;display:flex;align-items:center;gap:4px;padding-left:3px}
.sw{width:18px;height:18px;background:#fff;border:1px solid #888;display:block}
.g-export{width:77px}
.b-movie{width:36px;margin:3px 0 0 9px}
.movieico{width:32px;height:30px;margin-bottom:3px}
.exp2{display:flex;flex-direction:column;align-items:center;margin:3px 0 0 3px;gap:3px}
.activebtn{width:22px;height:22px;background:#555a63;border-radius:2px;display:flex;align-items:center;justify-content:center}
.g-manage{width:174px}
.g-manage .gbody{padding-left:7px}
.curan{height:24px;line-height:24px;white-space:nowrap}
.c-anim{width:160px}
.mrow{display:flex;align-items:center;margin-top:1px;height:22px;padding-left:2px}
.mrow .i16:nth-child(2){margin-left:11px}
.mred{margin-left:10px}
.ordbtn{width:22px;height:22px;background:#555a63;border-radius:2px;display:flex;align-items:center;justify-content:center;margin-left:15px}
.mrow>.i16:nth-child(5){margin-left:7px}
.mrow>.i16:nth-child(6){margin-left:10px}
.collapse{position:absolute;right:5px;top:81px;width:11px;height:11px;color:#ccc}
.redframe{position:absolute;left:933px;top:-11px;width:92px;height:111px;border:7px solid #ee1c25;pointer-events:none}
.redframe b{position:absolute;left:56px;top:58px;font:700 24px/28px "Liberation Sans",sans-serif;color:#ee1c25}

.dock{height:526px;background:#232324;display:flex;padding:7px 0 0 7px;gap:7px}
.contents{width:240px;height:512px;background:#333;border:1px solid #4a4a4a;border-radius:3px 3px 0 0;flex:none}
.phead{height:31px;display:flex;align-items:center;justify-content:space-between;padding:0 5px 0 6px}
.contents .phead{padding-bottom:2px}
.phead h2{font-size:15px;color:#dcdcdc}
.pctl{display:flex;gap:7px;color:#b8b8b8;align-items:center}
.pctl svg{width:12px;height:12px}
.searchrow{display:flex;align-items:center;padding-left:4px;gap:7px;height:24px}
.funnel{width:14px;height:16px}
.search{width:210px;height:23px;background:#232324;border:1px solid #6a6a6a;display:flex;align-items:center;padding:0 4px 0 6px;gap:6px}
.search em{flex:1;color:#9a9a9a}
.tools{display:flex;align-items:center;height:38px;padding-left:19px;position:relative}
.tool{height:22px}
.t-a{width:24px;height:24px}
.t-b{width:21px;margin-left:10px}
.t-c{width:20px;height:20px;margin-left:12px}
.t-d{width:20px;height:20px;margin-left:12px}
.t-e{width:24px;height:24px;margin-left:11px}
.t-f{width:14px;margin-left:9px}
.dots{font-size:11px;letter-spacing:1px;margin-left:9px;color:#ddd}
.tline{height:3px;width:179px;margin-left:22px;border-bottom:1px solid #555;margin-top:-2px}
.tline i{display:block;width:32px;height:3px;background:#1e8fe0}
h3{font-size:13.500px;color:#d8d8d8;padding:15px 0 0 15px;height:39px;line-height:18px}
.tree li{display:flex;align-items:center;white-space:nowrap}
.tr{width:8px;height:8px}
.tree .l0{height:24px;padding-left:2px}
.l0 .i16{margin-left:6px}
.l0 span{margin-left:6px}
.l1{height:24px;padding-left:14px}
.cb{width:14px;height:14px}
.l1 .cb{margin-left:3px}
.l1 span,.l2 span{margin-left:5px}
.tree .legend{display:block;padding:3px 0 0 29px;height:73px}
.mag{height:16px;line-height:16px}
.lg{display:flex;height:47px;margin-top:4px}
.ramp{width:20px;background:linear-gradient(#5a8a94,#8fa7b3 12%,#a9709f 32%,#b33a74 48%,#c40010 62%,#e45a00 78%,#ffd000 90%,#ffff00);display:block}
.lgt{display:flex;flex-direction:column;justify-content:space-between;padding-left:6px;margin-top:-1px;height:49px;color:#dcdcdc}
.l2{height:24px;padding-left:25px}
.l3{height:24px;padding-left:14px}
.l3 span{margin-left:3px}
.tree .sel{height:24px;margin:0 0 0 23px;width:215px;background:#2e4d6d;border:1px solid #1e8fe0;padding-left:1px}
.sel span{margin-left:7px}

.center{width:552px;flex:none;display:flex;flex-direction:column;height:513px}
.doctabs{height:22px;display:flex;justify-content:space-between;align-items:flex-start}
.doctab{width:77px;height:22px;background:#0f5fa8;border-radius:3px 3px 0 0;display:flex;align-items:center;padding-left:6px;gap:6px;color:#fff}
.dx{width:11px;height:11px;color:#fff;margin-left:2px}
.dchev{margin:4px 3px 0 0}
.mappanel{flex:1;border:1px solid #555;border-top:3px solid #0f5fa8;display:flex;flex-direction:column;background:#333}
.mapband{height:26px;background:#353535}
.mapwrap{height:413px}
.map{width:551px;height:413px}
.greens{fill:none;stroke:#d2e5b6;stroke-dasharray:5 2 9 3;opacity:.65}
.border{fill:none;stroke:#bfa9c8;stroke-width:1}
.border2{fill:none;stroke:#d9d0d8;stroke-width:.8}
.mapcircles{fill:none;stroke:#8da7c8}
.cities{fill:#9a9a9a;stroke:#777}
.mlab text{font:10px "DejaVu Sans",sans-serif;text-anchor:middle}
.pur text{fill:#a883ae}
.drk text{fill:#555}
.mlab.ital text{font-style:italic;font-weight:700;font-size:8.500px;fill:#a590b5}
.mlab .lg14{font-size:13px}
.mlab .lg12{font-size:11.500px}
.stamp{font:12px "Liberation Sans",sans-serif;fill:#fff;text-anchor:middle}
.year{font:43px "Liberation Sans",sans-serif;fill:#fff;text-anchor:middle}
.mapfoot{height:24px;display:flex;justify-content:flex-end;padding-right:5px;align-items:flex-start;padding-top:1px}
.scaleico{width:22px;height:20px}
.status{height:24px;display:flex;align-items:center;padding-left:5px}
.scale{width:100px;height:23px;border:1px solid #777;background:#232324;display:flex;align-items:center;justify-content:space-between;padding:0 5px 0 6px;font-size:11px}
.sep{width:1px;height:16px;background:#666;display:block}
.scale+.sep{margin-left:4px}
.sbtn{width:20px;height:20px;background:#0f5fa8;display:flex;align-items:center;justify-content:center;margin-left:5px}
.gridi{margin-left:5px}
.st{margin-left:7px}
.nt{font:700 9px "Noto Sans",sans-serif;fill:#2b98e0}
.s2{margin-left:5px}
.coords{margin-left:30px;white-space:nowrap;color:#d6d6d6;width:142px;font-size:11px;letter-spacing:-.3px}
.cc{margin-left:10px}
.s3{margin-left:32px}
.sel0{display:flex;align-items:center;gap:4px;width:40px;padding-left:8px;color:#777}
.pause{display:flex;gap:3px;margin:0 8px}
.pause i{display:block;width:4px;height:15px;background:#aaa}
.refresh{width:16px;height:18px;margin-left:8px}

.right{width:465px;flex:none;display:flex;flex-direction:column}
.exportp{height:493px;background:#333;border:1px solid #4e4e4e;border-radius:3px 3px 0 0;display:flex;flex-direction:column}
.phead.ex{height:30px;flex:none}
.phead.ex h2{font-size:15px}
.exscroll{display:flex;height:381px;flex:none}
.exmain{width:446px}
.sechead{height:20px;display:flex;align-items:center;gap:2px;color:#cfcfcf;font-weight:500;font-size:13px}
.sechead .chv{margin-left:5px}
.presets{height:242px;background:#232324;border:1px solid #6a6a6a;border-bottom:0;display:flex;flex-wrap:wrap;align-content:flex-start}
.preset{width:88px;height:78px;display:flex;flex-direction:column;align-items:center;padding-top:9px;color:#d4d4d4}
.preset.cur{background:#404347}
.pi{width:44px;height:44px;margin-bottom:8px;overflow:visible}
.res{font:700 15px "DejaVu Sans Mono",monospace;fill:#3d9ad6;text-anchor:middle}
.res2{font-size:13.500px}
.giftxt{font:10px "Noto Sans",sans-serif;fill:#263746;text-anchor:middle}
.whitebar{height:3px;background:#e8e8e8}
.autos{display:flex;align-items:center;gap:5px;margin:9px 0 0 11px;height:14px;white-space:nowrap}
.fname{margin:9px 0 0 11px;height:16px;color:#d8d8d8}
.frow{display:flex;align-items:center;gap:6px;margin-left:10px;margin-top:1px}
.finput{width:403px;height:21px;border:1px solid #777;background:#232324;display:flex;align-items:center;padding-left:4px;white-space:nowrap}
.fes{margin-top:11px}
.sbar{width:17px;background:#2a2a2b;display:flex;flex-direction:column;align-items:center;padding-top:6px;margin-top:-2px;position:relative}
.sbar .thumb{display:block;width:9px;height:305px;border-radius:5px;background:#6d6d6d;margin:4px 0 44px}
.warn{display:flex;align-items:center;gap:8px;margin:19px 0 0 18px;height:16px;color:#c8c8c8;font-size:11.500px}
.exbtnrow{display:flex;justify-content:flex-end;margin:18px 5px 0 0}
.exbtn{width:70px;height:24px;background:#232324;border:1px solid #cfcfcf;color:#e4e4e4;font:11.400px "Noto Sans",sans-serif}
.ptabs{height:20px;display:flex;align-items:stretch;padding-left:5px;white-space:nowrap}
.pt1{display:flex;align-items:center;width:118px;color:#d4d4d4;padding-top:2px}
.pt2{display:flex;align-items:center;justify-content:center;width:82px;margin-top:-1px;background:#333;border:1px solid #555;border-top:0;border-radius:0 0 3px 3px;color:#1e9ae0;padding-top:2px}

.vtabs{flex:none;display:flex;flex-direction:column;width:22px;color:#cfcfcf}
.vt{writing-mode:vertical-rl;border-right:4px solid #555;display:flex;align-items:center;justify-content:center;white-space:nowrap;width:22px;padding-right:2px}
.v1{height:40px}.v2{height:77px;margin-top:13px}.v3{height:60px;margin-top:13px}
```
